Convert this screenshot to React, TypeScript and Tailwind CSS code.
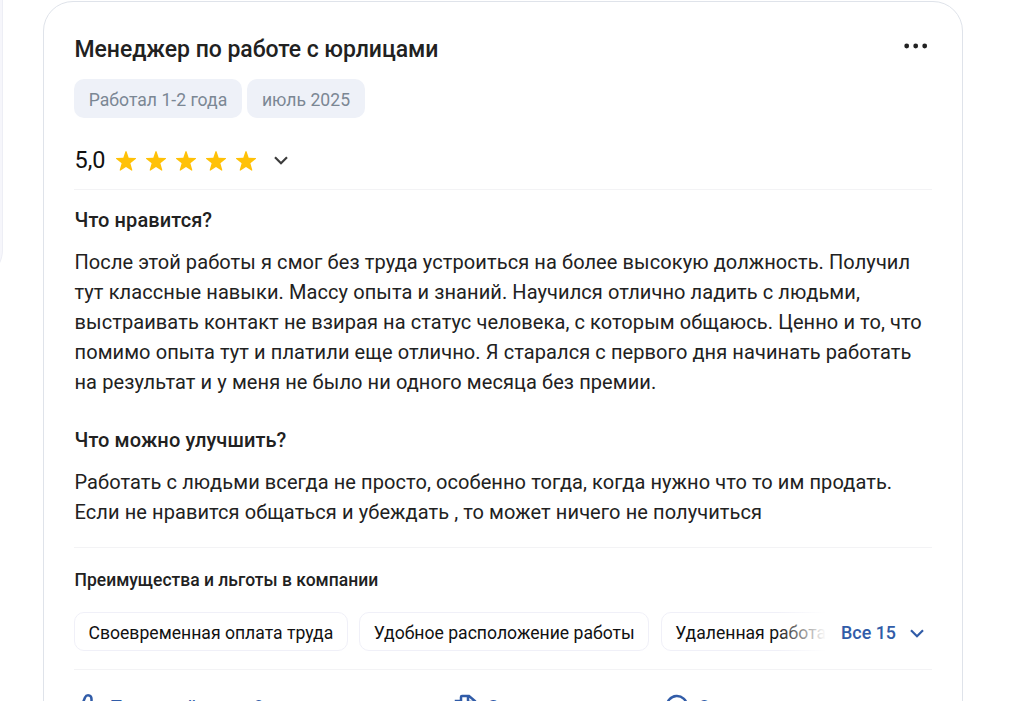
import { useState } from "react";

const BENEFITS = ["Своевременная оплата труда", "Удобное расположение работы", "Удаленная работа"];

const LIKED = [
  "После этой работы я смог без труда устроиться на более высокую должность. Получил",
  "тут классные навыки. Массу опыта и знаний. Научился отлично ладить с людьми,",
  "выстраивать контакт не взирая на статус человека, с которым общаюсь. Ценно и то, что",
  "помимо опыта тут и платили еще отлично. Я старался с первого дня начинать работать",
  "на результат и у меня не было ни одного месяца без премии.",
];

const IMPROVE = [
  "Работать с людьми всегда не просто, особенно тогда, когда нужно что то им продать.",
  "Если не нравится общаться и убеждать , то может ничего не получиться",
];

function Star() {
  return (
    <svg width="20" height="20" viewBox="0 0 20 20" fill="#ffc107">
      <path d="M9.4.6q.6-1.2 1.2 0l2.1 6.2 6.8.3q1 .2.2 1l-5.3 4.2 1.9 6.6q.1 1.1-.9.7L10 15.9l-5.4 3.7q-1 .4-.9-.7l1.9-6.6L.3 8.1q-.8-.8.2-1l6.8-.3z" />
    </svg>
  );
}

function Chevron() {
  return (
    <svg width="14" height="9" viewBox="0 0 14 9" fill="none" stroke="currentColor" strokeWidth="2.2">
      <path d="M1 1.2l6 6 6-6" />
    </svg>
  );
}

function Paragraph({ lines }: { lines: string[] }) {
  return (
    <p className="whitespace-nowrap text-[20px] leading-[30px] tracking-[0.09px]">
      {lines.map((line) => (
        <span key={line} className="block">{line}</span>
      ))}
    </p>
  );
}

export default function App() {
  const [ratingOpen, setRatingOpen] = useState(false);

  return (
    <div className="flex h-[701px] items-start overflow-hidden bg-white font-[Roboto,sans-serif] text-[#212121]">
      <div className="h-[280px] w-[3px] shrink-0 overflow-hidden">
        <div className="-ml-[57px] h-[280px] w-[60px] rounded-br-[30px] border-r border-b border-[#edeef5] bg-[#f6f6fb]" />
      </div>

      <article className="mt-px ml-10 h-[760px] w-[920px] shrink-0 rounded-[30px] border border-[#dfe3ea] px-[30px]">
        <header className="flex justify-between pt-8">
          <h2 className="pl-[0.5px] text-[23px] leading-[31px] font-medium tracking-[-0.05px] whitespace-nowrap">
            Менеджер по работе с юрлицами
          </h2>
          <button type="button" aria-label="Меню" className="mt-[9px] mr-1 h-[6px]">
            <svg width="24" height="6" viewBox="0 0 24 6" fill="currentColor">
              <circle cx="2.7" cy="3" r="2.4" />
              <circle cx="11.7" cy="3" r="2.4" />
              <circle cx="20.7" cy="3" r="2.4" />
            </svg>
          </button>
        </header>

        <div className="mt-[14px] flex gap-[5px] text-[17.6px] leading-[36px] text-[#7b8794]">
          <span className="w-[168px] rounded-[10px] bg-[#eef1f8] pt-[3px] text-center">Работал 1-2 года</span>
          <span className="w-[118px] rounded-[10px] bg-[#eef1f8] pt-[3px] text-center">июль 2025</span>
        </div>

        <div className="mt-[26px] flex h-[46px] items-start border-b border-[#f3f3f5]">
          <span className="w-[42px] pl-[0.5px] text-[23.5px] leading-[32px] text-[#111]">5,0</span>
          <div className="mt-[7px] flex gap-[10px]">
            {[1, 2, 3, 4, 5].map((n) => (
              <Star key={n} />
            ))}
          </div>
          <button
            type="button"
            aria-label="Оценки"
            className="mt-[12px] ml-[18px] text-[#3c3c3c]"
            onClick={() => setRatingOpen(!ratingOpen)}
          >
            <Chevron />
          </button>
        </div>

        <section className="pt-[15px] pl-[0.5px]">
          <h3 className="mb-[12px] text-[20px] leading-[30px] font-medium tracking-[0.1px]">Что нравится?</h3>
          <Paragraph lines={LIKED} />
        </section>
        <section className="border-b border-[#f3f3f5] pt-[28px] pb-[20px]">
          <div className="pl-[0.5px]">
            <h3 className="mb-[12px] text-[20px] leading-[30px] font-medium tracking-[0.1px]">Что можно улучшить?</h3>
            <Paragraph lines={IMPROVE} />
          </div>
        </section>

        <section className="border-b border-[#f3f3f5] pt-[17px] pb-[18px]">
          <h4 className="pl-[0.5px] text-[17.5px] leading-[30px] font-medium">Преимущества и льготы в компании</h4>
          <div className="mt-[17px] flex">
            <div className="relative flex w-[752px] gap-[11.5px] overflow-hidden text-[17.6px] leading-[33px] text-[#111]">
              {BENEFITS.map((b) => (
                <span key={b} className="shrink-0 rounded-[10px] border border-[#f0f0f8] px-[13.5px] pt-[4px]">{b}</span>
              ))}
              <div className="absolute top-0 right-0 h-full w-[50px] bg-linear-to-r from-white/0 to-white" />
            </div>
            <button
              type="button"
              className="ml-[15px] flex items-center gap-[14px] pt-[3px] text-[17.9px] font-medium text-[#315ca8]"
            >
              Все 15
              <Chevron />
            </button>
          </div>
        </section>

        <footer className="flex pt-6 text-[18px] leading-[26px] font-medium whitespace-nowrap text-[#315ca8]">
          <button type="button" className="flex w-[379px] items-start">
            <svg width="26" height="24" viewBox="0 0 26 24" fill="none" stroke="currentColor" strokeWidth="2.5" className="mr-[10px]">
              <path d="M8 22H3V11h5l3-7.5Q12.200 1 14.800 1.400q2.700.6 2.700 3.600v5h7l-2 12H8" />
            </svg>
            Полезный отзыв?
          </button>
          <button type="button" className="flex w-[212px] items-start">
            <svg width="26" height="24" viewBox="0 0 26 24" fill="none" stroke="currentColor" strokeWidth="2.5" className="mr-[8px]">
              <path d="M8 17V3q0-1 1-1h7l6 5v10H8M15 2v6h7M8 7H3v15h13v-5" />
            </svg>
            Скопировать
          </button>
          <button type="button" className="flex items-start">
            <svg width="26" height="24" viewBox="0 0 26 24" fill="none" stroke="currentColor" strokeWidth="2.5" className="mr-[7px]">
              <path d="M2 22v-9A10 10 0 1 1 12 22z" />
            </svg>
            Ответить
          </button>
        </footer>
      </article>
    </div>
  );
}
